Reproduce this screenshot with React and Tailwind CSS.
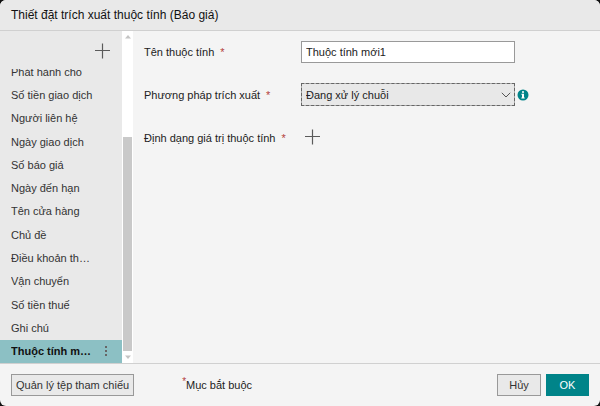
import React, { useState } from "react";

const initialAttributes = [
  "Phát hành cho",
  "Số tiền giao dịch",
  "Người liên hệ",
  "Ngày giao dịch",
  "Số báo giá",
  "Ngày đến hạn",
  "Tên cửa hàng",
  "Chủ đề",
  "Điều khoản thanh toán",
  "Vận chuyển",
  "Số tiền thuế",
  "Ghi chú",
  "Thuộc tính mới1",
];

const PlusIcon = () => (
  <svg viewBox="0 0 16 16" className="w-4 h-4" stroke="#5a5a5a" strokeWidth="1.2" fill="none">
    <path d="M7.5 0.5v15M0 7.5h15" />
  </svg>
);

const InfoIcon = () => (
  <svg viewBox="0 0 12 12" className="w-3 h-3">
    <circle cx="6" cy="6" r="5.5" fill="#008489" />
    <path d="M5 2.2h2v1.6H5zM4.4 4.8H7v3.6h.7v1H4.3v-1H5V5.8h-.6z" fill="#fff" />
  </svg>
);

const Label = ({ htmlFor, children }) => (
  <label htmlFor={htmlFor} className="w-[157px] shrink-0 whitespace-nowrap">
    {children}
    <span className="ml-1.5 text-[#b3403c]">*</span>
  </label>
);

const AttributeList = ({ selected, onSelect }) => (
  <aside className="flex w-[133px] shrink-0">
    <div className="flex flex-1 min-w-0 flex-col bg-[#e9e9e9]">
      <div className="flex h-[38px] shrink-0 items-end justify-end pr-[11px] pb-2.5">
        <button type="button" aria-label="Thêm">
          <PlusIcon />
        </button>
      </div>
      {/* Scrolled to the end, the first row is partly hidden */}
      <div className="flex min-h-0 flex-1 flex-col justify-end overflow-hidden">
        <ul className="grid h-[303px] shrink-0 auto-rows-fr">
          {initialAttributes.map((name, index) => (
            <li
              key={name}
              className={
                index === selected
                  ? "flex items-center bg-[#8cc0c4] px-[11px] font-bold text-[#111]"
                  : "flex items-center px-[11px] text-[#333]"
              }
            >
              <button
                type="button"
                onClick={() => onSelect(index)}
                className="w-[82px] truncate text-left"
              >
                {name}
              </button>
              {index === selected && (
                <svg viewBox="0 0 4 12" className="ml-auto mr-[3px] h-3 w-1" fill="#666">
                  <path d="M1 1h2v2H1zM1 5h2v2H1zM1 9h2v2H1z" />
                </svg>
              )}
            </li>
          ))}
        </ul>
      </div>
    </div>
    {/* Scrollbar */}
    <div className="flex w-[11px] flex-col items-center bg-white py-1">
      <svg viewBox="0 0 6 4" className="w-1.5 h-1" fill="#c4c4c4">
        <path d="M3 0l3 3.5H0z" />
      </svg>
      <div className="mt-auto mb-1 h-[214px] w-[9px] bg-[#c9c9c9]" />
      <svg viewBox="0 0 6 4" className="w-1.5 h-1" fill="#c4c4c4">
        <path d="M3 4L0 0.5h6z" />
      </svg>
    </div>
  </aside>
);

const App = () => {
  const [selected, setSelected] = useState(12);
  const [name, setName] = useState("Thuộc tính mới1");

  return (
    <div className="h-screen bg-[#111]">
      <div className="flex h-full flex-col overflow-hidden rounded-md bg-[#f4f4f4] font-['Liberation_Sans',Arial,sans-serif] text-[11px] leading-4 text-[#222]">
        <header className="flex h-[31px] shrink-0 items-center border-b border-[#d0d0d0] bg-[#e9e9e9] px-[11px]">
          <h1 className="text-[12px] text-[#111]">Thiết đặt trích xuất thuộc tính (Báo giá)</h1>
        </header>

        <main className="flex min-h-0 flex-1">
          <AttributeList selected={selected} onSelect={setSelected} />
          <form className="flex flex-1 flex-col gap-5 pl-[11px] pt-2.5">
            <div className="flex items-center">
              <Label htmlFor="name">Tên thuộc tính</Label>
              <input
                id="name"
                type="text"
                value={name}
                onChange={(e) => setName(e.target.value)}
                className="h-[22px] w-[214px] border border-[#999] bg-white px-1 text-[#222]"
              />
            </div>
            <div className="flex items-center">
              <Label htmlFor="method">Phương pháp trích xuất</Label>
              <div className="relative">
                <select
                  id="method"
                  className="block h-[23px] w-[214px] appearance-none border border-[#aaa] bg-[#e8e8e8] px-1 text-[#222] outline-1 -outline-offset-1 outline-dashed outline-[#666]"
                >
                  <option>Đang xử lý chuỗi</option>
                </select>
                <svg
                  viewBox="0 0 10 6"
                  className="pointer-events-none absolute right-1 top-[9px] h-1.5 w-2.5"
                  stroke="#555"
                  fill="none"
                >
                  <path d="M0.8 0.8l4.2 4.2 4.2-4.2" />
                </svg>
              </div>
              <button type="button" aria-label="Thông tin" className="ml-0.5">
                <InfoIcon />
              </button>
            </div>
            <div className="flex h-6 items-center">
              <Label htmlFor="format">Định dạng giá trị thuộc tính</Label>
              <button id="format" type="button" className="ml-1 pb-0.5">
                <PlusIcon />
              </button>
            </div>
          </form>
        </main>

        <footer className="flex h-[43px] shrink-0 items-center border-t border-[#d0d0d0] px-[11px]">
          <button type="button" className="h-[22px] border border-[#999] bg-[#e9e9e9] px-1 text-[#333]">
            Quản lý tệp tham chiếu
          </button>
          <p className="ml-12">
            <span className="align-top text-[10px] leading-none text-[#b3403c]">*</span>
            Mục bắt buộc
          </p>
          <div className="ml-auto flex gap-[5px]">
            <button type="button" className="h-[22px] w-11 border border-[#999] bg-[#e9e9e9] text-[#333]">
              Hủy
            </button>
            <button type="button" className="h-[22px] w-[43px] bg-[#008489] text-white">
              OK
            </button>
          </div>
        </footer>
      </div>
    </div>
  );
};

export default App;
